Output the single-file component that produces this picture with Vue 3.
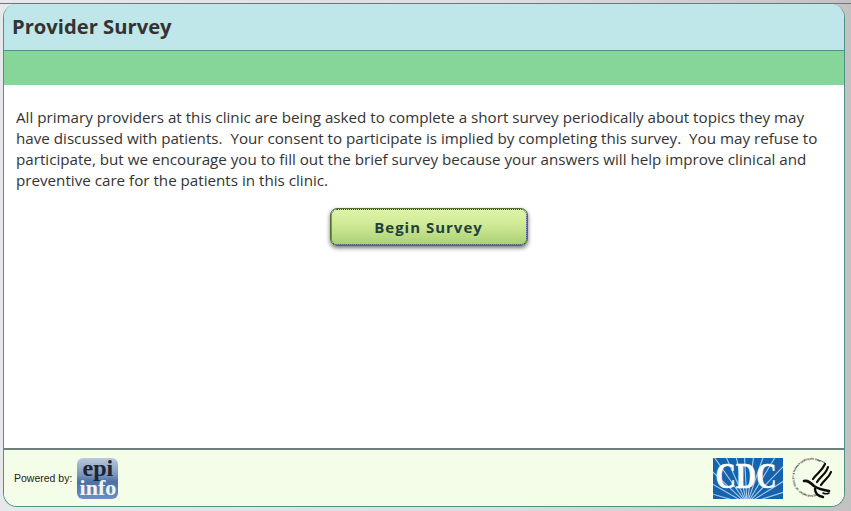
<script setup>
const consent = [
  'All primary providers at this clinic are being asked to complete a short survey periodically about topics they may',
  'have discussed with patients.\u00a0 Your consent to participate is implied by completing this survey.\u00a0 You may refuse to',
  'participate, but we encourage you to fill out the brief survey because your answers will help improve clinical and',
  'preventive care for the patients in this clinic.',
]
const rays = [-74, -60, -47, -35, -24, -13, -3, 8, 19, 31, 44, 58, 72]
</script>

<template>
  <div class="page">
    <div class="top-rule"></div>
    <div class="card">
      <header class="title-bar">
        <h1>Provider Survey</h1>
      </header>
      <div class="green-bar"></div>

      <main class="content">
        <p class="consent">
          <span v-for="(line, i) in consent" :key="i" class="line">{{ line }}</span>
        </p>
        <div class="actions">
          <button class="begin" type="button">Begin Survey</button>
        </div>
      </main>

      <footer class="footer">
        <div class="powered">
          <span class="powered-label">Powered by:</span>
          <div class="epi-logo">
            <span class="epi">epi</span>
            <span class="info">info</span>
          </div>
        </div>
        <div class="logos">
          <svg class="cdc" width="70" height="41" viewBox="0 0 70 41">
            <defs>
              <clipPath id="cdcBox"><rect width="70" height="41" /></clipPath>
            </defs>
            <rect width="70" height="41" fill="#1463ac" />
            <g stroke="#a9cbe9" stroke-width="1.1" clip-path="url(#cdcBox)">
              <line
                v-for="a in rays"
                :key="a"
                x1="34"
                y1="46"
                :x2="34 + 70 * Math.sin((a * Math.PI) / 180)"
                :y2="46 - 70 * Math.cos((a * Math.PI) / 180)"
              />
            </g>
            <text x="33" y="30" text-anchor="middle" class="cdc-text" textLength="61" lengthAdjust="spacingAndGlyphs">CDC</text>
          </svg>
          <svg class="seal" width="44" height="44" viewBox="0 0 44 44">
            <defs>
              <path id="sealArc" d="M27 38 A17.5 17.5 0 1 1 34 9" />
            </defs>
            <text class="seal-text"><textPath href="#sealArc">DEPARTMENT OF HEALTH &amp; HUMAN SERVICES USA</textPath></text>
            <path d="M28 4 A18.5 18.5 0 0 1 35 7" fill="none" stroke="#444" stroke-width="0.8" />
            <g fill="none" stroke="#0c0c0c" stroke-linecap="round">
              <path d="M35 8 C32 15 27 17 23 23" stroke-width="2.2" />
              <path d="M38 11 C36 18 31 20 27 26" stroke-width="2.2" />
              <path d="M41 16 C39 22 34 24 31 29" stroke-width="2.2" />
              <path d="M14 25 C18 24 21 27 24 30 C28 33 33 34 39 35" stroke-width="2.6" />
              <path d="M25 33 C25 37 28 40 33 41" stroke-width="2.4" />
              <path d="M33 37 C35 38 37 38 39 37" stroke-width="1.6" />
            </g>
          </svg>
        </div>
      </footer>
    </div>
  </div>
</template>

<style scoped>
.page {
  box-sizing: border-box;
  height: 511px;
  padding: 3px 6px 0 3px;
  background: linear-gradient(90deg, #e6e8ec 0, #dcdde0 60%, #c2c2c2 100%);
  font-family: "Open Sans", "Noto Sans", sans-serif;
}

.top-rule {
  height: 1px;
  margin: 0 -6px 0 -3px;
  background: #6f7680;
}

.card {
  box-sizing: border-box;
  height: 503px;
  display: flex;
  flex-direction: column;
  border: 1px solid #4f9088;
  border-top-width: 0;
  border-radius: 14px;
  overflow: hidden;
  background: #fff;
}

.title-bar {
  height: 46px;
  flex: none;
  display: flex;
  align-items: center;
  padding-left: 8px;
  background: #bfe6e8;
  border-bottom: 1px solid #4f9088;
}

h1 {
  margin: 0 0 3px;
  font-size: 20.2px;
  font-weight: 700;
  color: #333333;
}

.green-bar {
  height: 34px;
  flex: none;
  background: #86d69a;
}

.content {
  flex: 1;
  padding: 22px 11px 0 12px;
}

.consent {
  margin: 0;
  font-size: 15.18px;
  line-height: 21px;
  color: #333333;
}

.line {
  display: block;
  white-space: nowrap;
}

.actions {
  display: flex;
  justify-content: center;
  margin-top: 17px;
  padding-left: 8px;
}

.begin {
  width: 198px;
  height: 38px;
  border: 1px solid #55703a;
  border-radius: 7px;
  background: linear-gradient(180deg, #dff3a9 0%, #cfe995 45%, #a9cf72 100%);
  outline: 1px dotted #23308a;
  outline-offset: -2px;
  box-shadow: 0 2px 4px rgba(0, 0, 0, 0.55);
  font-family: "Open Sans", sans-serif;
  font-size: 15px;
  font-weight: 700;
  letter-spacing: 1px;
  color: #21413f;
}

.footer {
  height: 56px;
  flex: none;
  display: flex;
  justify-content: space-between;
  align-items: center;
  padding: 0 10px;
  background: #f4fde8;
  border-top: 2px solid #6f7f7c;
}

.powered {
  display: flex;
  align-items: center;
  gap: 5px;
}

.powered-label {
  font-family: "Liberation Sans", sans-serif;
  font-size: 10.5px;
  color: #222;
}

.epi-logo {
  width: 41px;
  height: 41px;
  border-radius: 6px;
  display: flex;
  flex-direction: column;
  align-items: center;
  background: linear-gradient(180deg, #bccadb 0%, #7e98ba 40%, #4a70a5 58%, #6d90bd 100%);
  font-family: "Liberation Serif", serif;
  font-weight: 700;
  line-height: 20px;
}

.epi {
  height: 20px;
  font-size: 24px;
  color: #1c2534;
}

.info {
  height: 20px;
  font-size: 22px;
  color: #f2f5fa;
}

.logos {
  display: flex;
  align-items: center;
  gap: 7px;
}

.cdc,
.seal {
  overflow: visible;
}

.cdc-text {
  font-family: "Liberation Serif", serif;
  font-size: 36px;
  font-weight: 700;
  fill: #fff;
  stroke: #fff;
  stroke-width: 0.5px;
}

.seal-text {
  font-family: "Liberation Sans", sans-serif;
  font-size: 2.7px;
  font-weight: 700;
  fill: #222;
}
</style>

<style>
html,
body {
  margin: 0;
}
</style>
